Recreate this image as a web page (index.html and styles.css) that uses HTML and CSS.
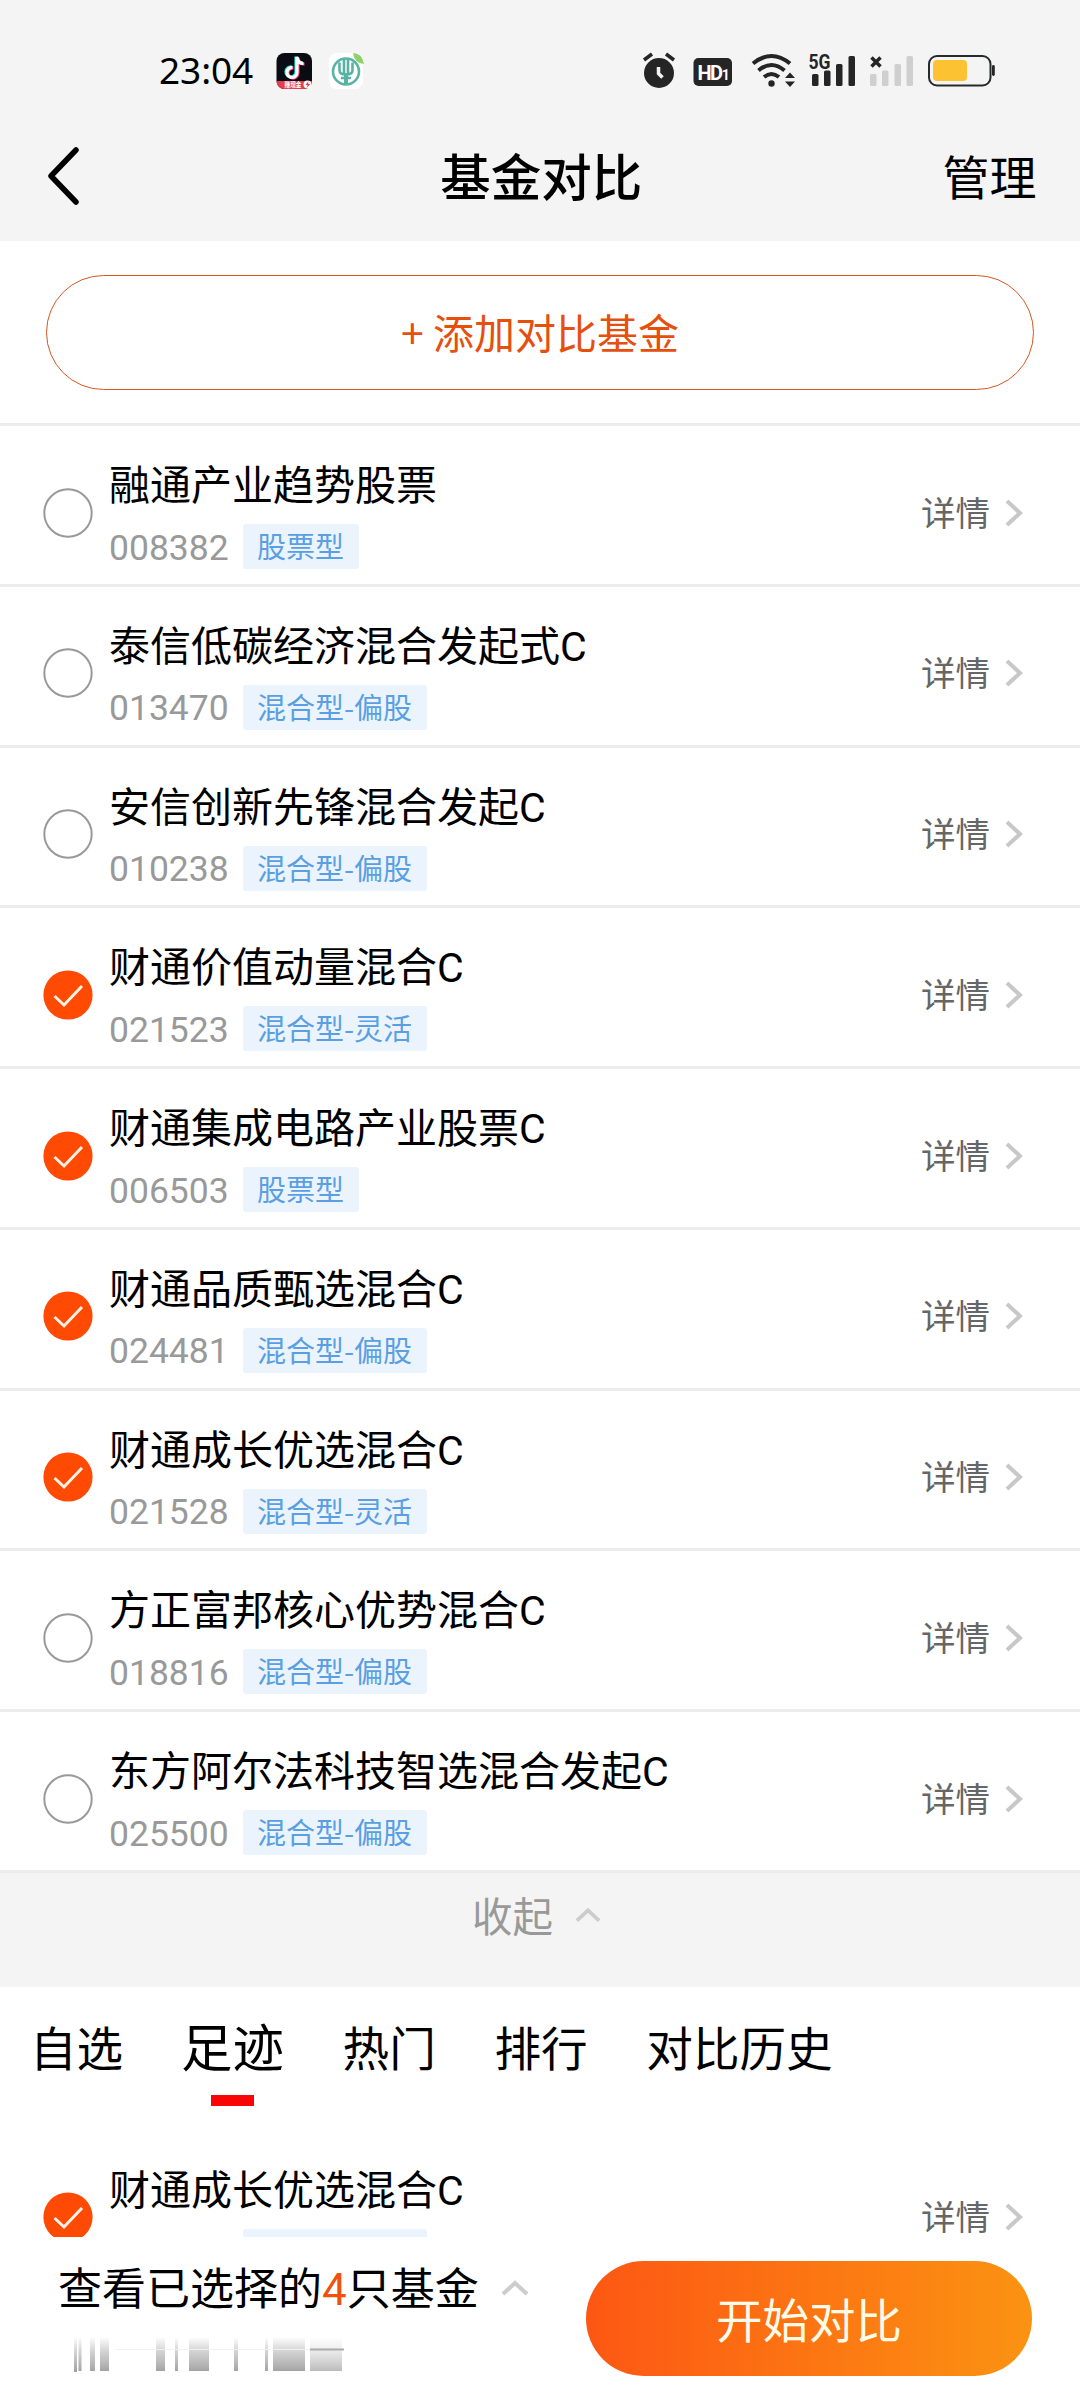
FILE: index.html
```html
<!DOCTYPE html>
<html lang="zh-CN">
<head>
<meta charset="utf-8">
<title>基金对比</title>
<link rel="stylesheet" href="styles.css">
</head>
<body>
<svg width="0" height="0" class="defs">
  <symbol id="right" viewBox="0 0 18 28"><path d="M2 2 15 14 2 26" fill="none" stroke="#c8c8c8" stroke-width="4"/></symbol>
  <symbol id="up" viewBox="0 0 28 16"><path d="M2 14 14 3 26 14" fill="none" stroke="#ccc" stroke-width="4"/></symbol>
  <symbol id="off" viewBox="0 0 50 50"><circle cx="25" cy="25" r="23.7" fill="#fff" stroke="#999" stroke-width="2"/></symbol>
  <symbol id="on" viewBox="0 0 50 50"><circle cx="25" cy="25" r="24.6" fill="#ff4a04"/><path d="m11.5 26 9.5 9L39 16" fill="none" stroke="#fff3e6" stroke-width="3"/></symbol>
</svg>
<div class="screen">
  <header class="top">
    <div class="status">
      <span class="clock">23:04</span>
      <svg class="apps" width="90" height="42" viewBox="274 50 90 42">
        <rect x="276.500" y="53" width="35.500" height="36" rx="8" fill="#0b0b14"/>
        <path d="M276.500 81H312a8 8 0 0 1-8 8h-19.500a8 8 0 0 1-8-8Z" fill="#e63e4c"/>
        <g fill="none" stroke-width="3.200"><path d="M292.500 67.500a5 5 0 1 0 4.500 5V57c.5 4 3 6.500 6.500 6.500" stroke="#25e8e4" transform="translate(-1 -.6)"/><path d="M292.500 67.500a5 5 0 1 0 4.500 5V57c.5 4 3 6.500 6.500 6.500" stroke="#f8376a" transform="translate(1 .6)"/><path d="M292.500 67.500a5 5 0 1 0 4.500 5V57c.5 4 3 6.500 6.500 6.500" stroke="#fff"/></g>
        <text x="284.500" y="87" class="badge" textLength="17" lengthAdjust="spacingAndGlyphs">赚现金</text>
        <circle cx="307.500" cy="84.500" r="4" fill="#fff"/>
        <path d="m308.500 81-3 4h2l-1 3 4-4.200h-2.500Z" fill="#e63e4c"/>
        <rect x="329" y="53" width="34" height="36" rx="8" fill="#fff"/>
        <circle cx="346" cy="71.500" r="13" fill="none" stroke="#59b3a5" stroke-width="2.600"/>
        <path d="M346 73v12" stroke="#59b3a5" stroke-width="4"/>
        <path d="M339.500 62.500v8q0 4 6.500 4t6.500-4v-8M344 58.500V74M348 58.500V74M341 78h10" fill="none" stroke="#59b3a5" stroke-width="2.600"/>
        <path d="M353 53q9 0 11 11-10-1-11-11" fill="#8ed06a"/>
      </svg>
      <svg class="system" width="366" height="42" viewBox="640 50 366 42">
        <g fill="#252525" stroke="none">
          <circle cx="659" cy="73" r="15"/>
          <path d="m644 60 8-6M666 54l8 6" stroke="#252525" stroke-width="3.500"/>
          <path d="M658.500 67v6.500l4 4" fill="none" stroke="#f4f4f4" stroke-width="3.500"/>
          <rect x="693.500" y="58" width="38.500" height="28" rx="5"/>
          <text x="697.500" y="80" class="hd">HD<tspan class="one">1</tspan></text>
          <circle cx="771.500" cy="83.500" r="3.200"/>
          <g fill="none" stroke="#252525" stroke-width="4"><path d="M753 63.500q18.500-15 37 0"/><path d="M758.500 70.500q13-11 26 0"/><path d="M764 77q7.500-6 15 0"/></g>
          <path d="m790 72.500 5 5.500h-10ZM790 87l5-5.500h-10Z"/>
          <rect x="812" y="74" width="6.500" height="12" rx="1.500"/><rect x="824" y="70.500" width="6.500" height="15.500" rx="1.500"/><rect x="836" y="64" width="6.500" height="22" rx="1.500"/><rect x="848.500" y="56" width="6.500" height="30" rx="1.500"/>
          <text x="808.500" y="68.500" class="net" textLength="22" lengthAdjust="spacingAndGlyphs">5G</text>
          <path d="m871.500 57.500 9 9m0-9-9 9" stroke="#252525" stroke-width="3.500"/>
        </g>
        <g fill="#cfcfcf"><rect x="870" y="74" width="6.500" height="12" rx="1.500"/><rect x="882" y="70.500" width="6.500" height="15.500" rx="1.500"/><rect x="894.500" y="64" width="6.500" height="22" rx="1.500"/><rect x="906.500" y="56" width="6.500" height="30" rx="1.500"/></g>
        <rect x="929" y="56" width="61.500" height="29.500" rx="8" fill="none" stroke="#252b2b" stroke-width="2"/>
        <rect x="933" y="60" width="34" height="21" rx="4" fill="#fcc232"/>
        <rect x="992" y="65" width="2.800" height="11" rx="1.400" fill="#252525"/>
      </svg>
    </div>
    <div class="nav">
      <svg width="34" height="58" viewBox="0 0 34 58"><path d="M30 3 5 29 30 55" fill="none" stroke="#000" stroke-width="5.500" stroke-linecap="round" stroke-linejoin="round"/></svg>
      <h1>基金对比</h1>
      <span class="manage">管理</span>
    </div>
  </header>

  <div class="add"><button class="add-btn">+ 添加对比基金</button></div>

  <ul class="funds">
    <li class="fund"><svg class="check"><use href="#off"/></svg><div class="info"><div class="name">融通产业趋势股票</div><div class="meta"><span class="code">008382</span><span class="tag">股票型</span></div></div><div class="detail">详情<svg><use href="#right"/></svg></div></li>
    <li class="fund"><svg class="check"><use href="#off"/></svg><div class="info"><div class="name">泰信低碳经济混合发起式C</div><div class="meta"><span class="code">013470</span><span class="tag">混合型-偏股</span></div></div><div class="detail">详情<svg><use href="#right"/></svg></div></li>
    <li class="fund"><svg class="check"><use href="#off"/></svg><div class="info"><div class="name">安信创新先锋混合发起C</div><div class="meta"><span class="code">010238</span><span class="tag">混合型-偏股</span></div></div><div class="detail">详情<svg><use href="#right"/></svg></div></li>
    <li class="fund"><svg class="check"><use href="#on"/></svg><div class="info"><div class="name">财通价值动量混合C</div><div class="meta"><span class="code">021523</span><span class="tag">混合型-灵活</span></div></div><div class="detail">详情<svg><use href="#right"/></svg></div></li>
    <li class="fund"><svg class="check"><use href="#on"/></svg><div class="info"><div class="name">财通集成电路产业股票C</div><div class="meta"><span class="code">006503</span><span class="tag">股票型</span></div></div><div class="detail">详情<svg><use href="#right"/></svg></div></li>
    <li class="fund"><svg class="check"><use href="#on"/></svg><div class="info"><div class="name">财通品质甄选混合C</div><div class="meta"><span class="code">024481</span><span class="tag">混合型-偏股</span></div></div><div class="detail">详情<svg><use href="#right"/></svg></div></li>
    <li class="fund"><svg class="check"><use href="#on"/></svg><div class="info"><div class="name">财通成长优选混合C</div><div class="meta"><span class="code">021528</span><span class="tag">混合型-灵活</span></div></div><div class="detail">详情<svg><use href="#right"/></svg></div></li>
    <li class="fund"><svg class="check"><use href="#off"/></svg><div class="info"><div class="name">方正富邦核心优势混合C</div><div class="meta"><span class="code">018816</span><span class="tag">混合型-偏股</span></div></div><div class="detail">详情<svg><use href="#right"/></svg></div></li>
    <li class="fund"><svg class="check"><use href="#off"/></svg><div class="info"><div class="name">东方阿尔法科技智选混合发起C</div><div class="meta"><span class="code">025500</span><span class="tag">混合型-偏股</span></div></div><div class="detail">详情<svg><use href="#right"/></svg></div></li>
  </ul>

  <div class="collapse">收起<svg width="26" height="16"><use href="#up"/></svg></div>

  <nav class="tabs">
    <span class="tab">自选</span><span class="tab active">足迹</span><span class="tab">热门</span><span class="tab">排行</span><span class="tab">对比历史</span>
  </nav>

  <ul class="funds recent">
    <li class="fund"><svg class="check"><use href="#on"/></svg><div class="info"><div class="name">财通成长优选混合C</div><div class="meta"><span class="tag blank"></span></div></div><div class="detail">详情<svg><use href="#right"/></svg></div></li>
  </ul>

  <footer class="bar">
    <div class="picked">
      <div class="summary">查看已选择的<b>4</b>只基金<svg width="28" height="16"><use href="#up"/></svg></div>
      <svg class="residue" width="290" height="38" viewBox="57 2336 290 38">
        <defs><linearGradient id="fade" x1="0" y1="2337" x2="0" y2="2371" gradientUnits="userSpaceOnUse"><stop offset="0" stop-color="#aaa" stop-opacity="0"/><stop offset=".4" stop-color="#aaa" stop-opacity=".5"/><stop offset="1" stop-color="#999" stop-opacity=".9"/></linearGradient><linearGradient id="fade-soft" x1="0" y1="2337" x2="0" y2="2371" gradientUnits="userSpaceOnUse"><stop offset="0" stop-color="#ccc" stop-opacity="0"/><stop offset="1" stop-color="#aaa" stop-opacity=".8"/></linearGradient></defs>
        <path fill="url(#fade)" d="M73 2337h3v35h-3ZM77.500 2337h3v34h-3ZM89 2337h5v34h-5ZM99 2337h9v34h-9ZM155 2337h9v34h-9ZM174 2337h3v34h-3ZM188 2337h20v34h-20ZM233 2337h4v34h-4ZM264 2337h3v34h-3ZM272 2337h32v34h-32Z"/>
        <path fill="url(#fade-soft)" d="M309 2337h32v34h-32Z"/>
        <path d="M115 2349.500H309" stroke="#f1f1f1" stroke-width="1"/><path d="M309 2349.500h34" stroke="#aaa" stroke-width="2"/>
      </svg>
    </div>
    <button class="start">开始对比</button>
  </footer>
</div>
</body>
</html>
```
FILE: styles.css
```css
* { box-sizing: border-box; }
body { margin: 0; background: #fff; color: #000; font-family: Roboto, "Noto Sans CJK SC", sans-serif; }
.defs { position: absolute; }
.screen { width: 1080px; height: 2400px; display: flex; flex-direction: column; overflow: hidden; }
.top { height: 241px; background: #f4f4f4; flex: none; }
.status { height: 130px; padding: 50px 74px 0 159px; display: flex; align-items: flex-start; }
.clock { width: 115px; margin-top: -1px; font: 37px/42px "Noto Sans", sans-serif; letter-spacing: -.1px; }
.system { margin-left: auto; }
.badge { font: bold 6.500px "Noto Sans CJK SC", sans-serif; fill: #fff; }
.hd { font: bold 20px Roboto, sans-serif; letter-spacing: -1.500px; fill: #fff; }
.one { font-size: 14px; }
.net { font: bold 20px Roboto, sans-serif; }
.nav { height: 92px; padding: 0 43px 0 46px; display: grid; grid-template-columns: 94px 1fr 94.500px; align-items: center; }
h1 { margin: 5px 0 0; text-align: center; font-size: 50.500px; font-weight: 500; line-height: 70px; }
.manage { margin-top: 5px; font-size: 47px; line-height: 70px; white-space: nowrap; }
.add { height: 182px; padding: 34px 46px 0; flex: none; }
.add-btn { display: block; width: 988px; height: 115px; border: 1.500px solid #d4571f; border-radius: 58px; background: #fff; color: #e5500f; font: 41px "Noto Sans CJK SC", sans-serif; padding: 0 0 3px; }
.funds { list-style: none; margin: 0; padding: 0; flex: none; }
.fund { height: 160.75px; border-top: 3px solid #ececec; padding: 0 57px 0 42.500px; display: flex; align-items: flex-start; }
.check { width: 50px; height: 50px; margin-top: 61.500px; flex: none; }
.info { margin-left: 16.500px; padding-top: 32px; flex: 1; }
.name { font-size: 41px; line-height: 56px; white-space: nowrap; }
.meta { display: flex; align-items: center; margin-top: 10px; height: 45px; }
.code { width: 134px; color: #999; font-size: 35.500px; line-height: 45px; padding-top: 3px; }
.tag { height: 45px; padding: 0 14.500px 0 14px; background: #ebf4fd; border-radius: 3px; color: #5a9fe4; font: 29px/43px "Noto Sans CJK SC", sans-serif; white-space: nowrap; }
.tag.blank { width: 184px; margin-left: 134px; }
.detail { margin-top: 61.500px; height: 50px; display: flex; align-items: center; gap: 15px; color: #666; font-size: 34.500px; line-height: 50px; padding-top: 2px; }
.detail svg { width: 18px; height: 28px; margin-top: -2px; }
.collapse { height: 117px; border-top: 3px solid #ececec; background: #f4f4f4; color: #999; font-size: 40.500px; display: flex; justify-content: center; align-items: flex-start; line-height: 90px; gap: 22px; padding-right: 7px; flex: none; }
.collapse svg { margin-top: 34px; }
.tabs { height: 141px; padding: 18px 30px 0; display: flex; align-items: flex-start; gap: 58.700px; font-size: 46.600px; line-height: 90px; flex: none; }
.tab { white-space: nowrap; }
.tab.active { margin-left: -1px; font-size: 51.500px; display: flex; flex-direction: column; align-items: center; }
.tab.active::after { content: ""; width: 43px; height: 11px; background: #f90505; }
.recent { height: 109px; overflow: hidden; }
.recent .fund { border-color: #fff; }
.bar { flex: 1; background: #fff; padding: 24px 48px 0 58px; display: flex; justify-content: space-between; align-items: flex-start; }
.summary { display: flex; align-items: center; font-size: 44px; line-height: 58px; white-space: nowrap; }
.summary b { color: #f0510e; font-weight: 400; }
.summary svg { margin: -4px 0 0 22px; }
.residue { display: block; margin-top: 17px; }
.start { width: 446px; height: 115px; border: 0; border-radius: 58px; padding: 0 0 1px; background: linear-gradient(90deg, #fd5713, #fb9312); color: #fffbe9; font: 46.500px "Noto Sans CJK SC", sans-serif; }
```
